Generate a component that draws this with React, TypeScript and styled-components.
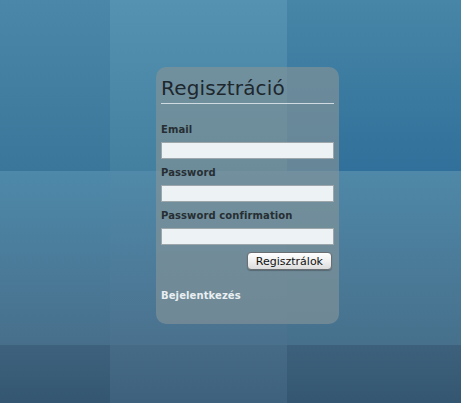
import React from "react";
import styled, { createGlobalStyle } from "styled-components";

const Global = createGlobalStyle`
  html, body { margin: 0; padding: 0; }
  body { width: 461px; height: 403px; overflow: hidden; font-family: "DejaVu Sans", "Liberation Sans", sans-serif; }
`;

const Stage = styled.div`
  position: relative;
  width: 461px;
  height: 403px;
  overflow: hidden;
`;

const Tiles = styled.div`
  display: grid;
  grid-template-columns: 110px 177px 1fr;
  grid-template-rows: 171px 174px 1fr;
  width: 100%;
  height: 100%;
`;

const Tile = styled.div<{ $top: string; $bottom: string }>`
  background: linear-gradient(to bottom, ${(p) => p.$top}, ${(p) => p.$bottom});
`;

const Layer = styled.div`
  position: absolute;
  inset: 0;
  display: flex;
  justify-content: flex-start;
  align-items: flex-start;
  padding: 67px 0 0 156px;
`;

const Panel = styled.div`
  width: 183px;
  height: 257px;
  box-sizing: border-box;
  padding: 7px 5px 0 5px;
  border-radius: 10px;
  background: rgba(132, 148, 152, 0.65);
  display: flex;
  flex-direction: column;
`;

const Title = styled.h1`
  margin: 0;
  font-weight: normal;
  font-size: 20px;
  line-height: 28px;
  color: #1d272d;
  letter-spacing: 0.2px;
  padding-bottom: 1px;
  border-bottom: 1px solid #cfdbe1;
`;

const Form = styled.form`
  display: flex;
  flex-direction: column;
  margin-top: 19px;
`;

const Label = styled.label`
  font-size: 10px;
  font-weight: bold;
  line-height: 13px;
  letter-spacing: 0.1px;
  color: #262e33;
  margin-bottom: 6px;
`;

const Input = styled.input`
  box-sizing: border-box;
  width: 173px;
  height: 17px;
  margin: 0 0 7px 0;
  padding: 0 2px;
  border: 1px solid #9da6ab;
  background: #edf2f5;
  outline: none;
`;

const Actions = styled.div`
  display: flex;
  justify-content: flex-end;
  padding-right: 2px;
`;

const Button = styled.button`
  box-sizing: border-box;
  height: 18px;
  padding: 0 8px;
  font-family: "DejaVu Sans", "Liberation Sans", sans-serif;
  font-size: 11px;
  color: #111;
  border: 1px solid #6a6f73;
  border-radius: 4px;
  background: linear-gradient(to bottom, #ffffff, #f0f0f0 50%, #dcdcdc);
  box-shadow: 0 1px 1px rgba(0, 0, 0, 0.25);
`;

const Link = styled.a`
  margin-top: 19px;
  font-size: 10px;
  line-height: 13px;
  letter-spacing: 0.1px;
  font-weight: bold;
  color: #e9eff2;
  text-decoration: none;
`;

const tiles: [string, string][] = [
  ["#4a87a8", "#3a7699"],
  ["#5591b1", "#437f9f"],
  ["#4886a7", "#30709a"],
  ["#4e89aa", "#476f8b"],
  ["#5089a9", "#4a718e"],
  ["#4f88a8", "#46708c"],
  ["#3e627e", "#345670"],
  ["#466b87", "#3e627e"],
  ["#3d617c", "#345671"],
];

export default function App() {
  return (
    <Stage>
      <Global />
      <Tiles>
        {tiles.map(([t, b], i) => (
          <Tile key={i} $top={t} $bottom={b} />
        ))}
      </Tiles>
      <Layer>
        <Panel>
          <Title>Regisztráció</Title>
          <Form onSubmit={(e) => e.preventDefault()}>
            <Label htmlFor="email">Email</Label>
            <Input id="email" type="text" />
            <Label htmlFor="pw">Password</Label>
            <Input id="pw" type="password" />
            <Label htmlFor="pwc">Password confirmation</Label>
            <Input id="pwc" type="password" />
            <Actions>
              <Button type="submit">Regisztrálok</Button>
            </Actions>
            <Link href="#">Bejelentkezés</Link>
          </Form>
        </Panel>
      </Layer>
    </Stage>
  );
}
